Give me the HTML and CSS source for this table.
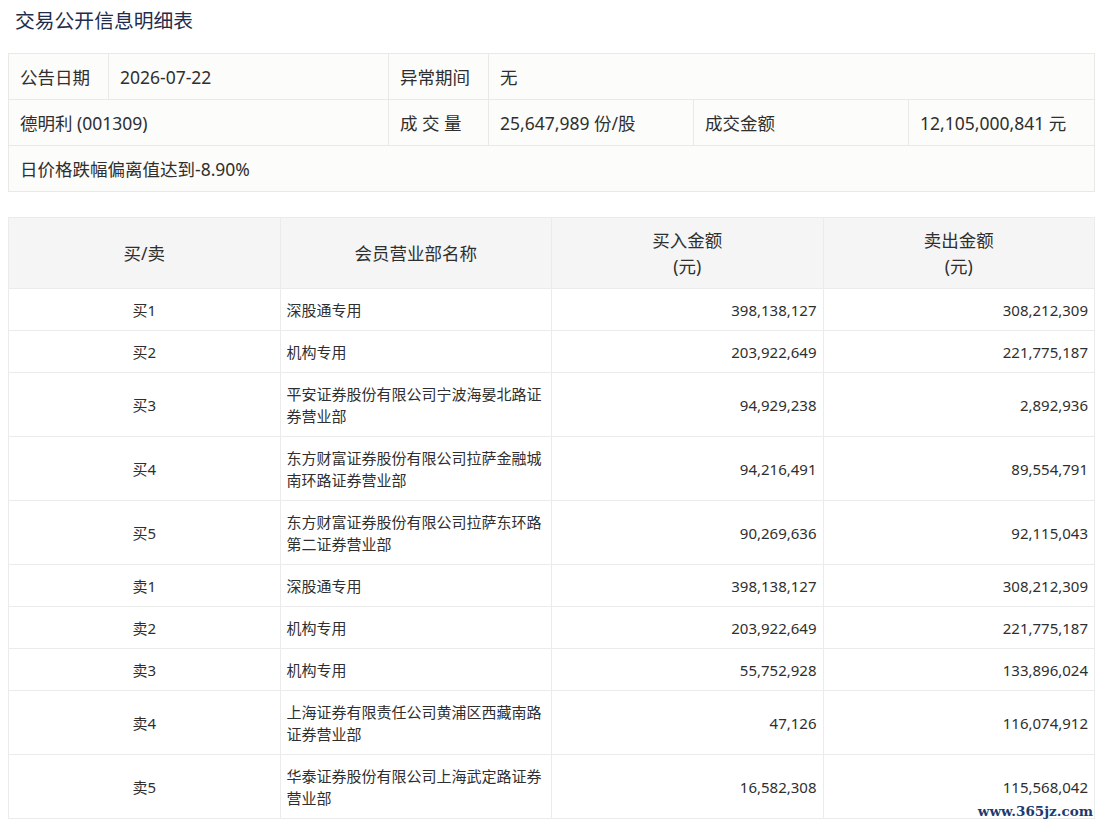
FILE: index.html
```html
<!DOCTYPE html>
<html lang="zh-CN">
<head>
<meta charset="utf-8">
<title>交易公开信息明细表</title>
<link rel="stylesheet" href="styles.css">
</head>
<body>
<h2 class="title">交易公开信息明细表</h2>
<table class="info">
  <colgroup>
    <col style="width:100px"><col style="width:280px"><col style="width:100px"><col style="width:205px"><col style="width:215px"><col>
  </colgroup>
  <tr>
    <td>公告日期</td>
    <td>2026-07-22</td>
    <td>异常期间</td>
    <td colspan="3">无</td>
  </tr>
  <tr>
    <td colspan="2">德明利 (001309)</td>
    <td>成 交 量</td>
    <td>25,647,989 份/股</td>
    <td>成交金额</td>
    <td>12,105,000,841 元</td>
  </tr>
  <tr>
    <td colspan="6">日价格跌幅偏离值达到-8.90%</td>
  </tr>
</table>

<table class="detail">
  <thead>
    <tr>
      <th>买/卖</th>
      <th>会员营业部名称</th>
      <th>买入金额<br>(元)</th>
      <th>卖出金额<br>(元)</th>
    </tr>
  </thead>
  <tbody>
    <tr><td class="c">买1</td><td class="n">深股通专用</td><td class="r">398,138,127</td><td class="r">308,212,309</td></tr>
    <tr><td class="c">买2</td><td class="n">机构专用</td><td class="r">203,922,649</td><td class="r">221,775,187</td></tr>
    <tr class="tall"><td class="c">买3</td><td class="n">平安证券股份有限公司宁波海晏北路证券营业部</td><td class="r">94,929,238</td><td class="r">2,892,936</td></tr>
    <tr class="tall"><td class="c">买4</td><td class="n">东方财富证券股份有限公司拉萨金融城南环路证券营业部</td><td class="r">94,216,491</td><td class="r">89,554,791</td></tr>
    <tr class="tall"><td class="c">买5</td><td class="n">东方财富证券股份有限公司拉萨东环路第二证券营业部</td><td class="r">90,269,636</td><td class="r">92,115,043</td></tr>
    <tr><td class="c">卖1</td><td class="n">深股通专用</td><td class="r">398,138,127</td><td class="r">308,212,309</td></tr>
    <tr><td class="c">卖2</td><td class="n">机构专用</td><td class="r">203,922,649</td><td class="r">221,775,187</td></tr>
    <tr><td class="c">卖3</td><td class="n">机构专用</td><td class="r">55,752,928</td><td class="r">133,896,024</td></tr>
    <tr class="tall"><td class="c">卖4</td><td class="n">上海证券有限责任公司黄浦区西藏南路证券营业部</td><td class="r">47,126</td><td class="r">116,074,912</td></tr>
    <tr class="tall"><td class="c">卖5</td><td class="n">华泰证券股份有限公司上海武定路证券营业部</td><td class="r">16,582,308</td><td class="r">115,568,042</td></tr>
  </tbody>
</table>
<div class="watermark">www.365jz.com</div>
</body>
</html>
```

FILE: styles.css
```css
html, body {
  margin: 0;
  padding: 0;
  background: #ffffff;
}
body {
  padding: 0 6px 0 8px;
  font-family: "Noto Sans", "Noto Sans CJK SC", sans-serif;
  color: #2f2f2f;
  position: relative;
  height: 829px;
  box-sizing: border-box;
  overflow: hidden;
}
.title {
  margin: 0;
  padding: 7px 0 0 7px;
  height: 53px;
  box-sizing: border-box;
  font-size: 19.8px;
  font-weight: normal;
  line-height: 28px;
  color: #1f2d4d;
}
table {
  border-collapse: collapse;
  width: 1087px;
  table-layout: fixed;
}
.info {
  background: #fcfcfa;
  font-size: 17.5px;
}
.info td {
  border: 1px solid #e9e9e7;
  height: 45px;
  padding: 0 11px;
  line-height: 22px;
  white-space: nowrap;
}
.detail {
  margin-top: 25px;
  font-size: 15px;
}
.detail th {
  background: #f5f5f5;
  font-weight: normal;
  font-size: 17.5px;
  line-height: 26px;
  height: 70px;
  border: 1px solid #ebebeb;
  padding: 0 6px;
}
.detail td {
  border: 1px solid #ebebeb;
  height: 41px;
  padding: 0 6px;
  line-height: 22px;
}
.detail tr.tall td {
  height: 63px;
}
.detail td.c { text-align: center; }
.detail td.r { text-align: right; }
.watermark {
  position: absolute;
  right: 8px;
  top: 803px;
  font-family: "DejaVu Serif", serif;
  font-weight: bold;
  font-size: 13.5px;
  color: #1c3b6f;
}
```
